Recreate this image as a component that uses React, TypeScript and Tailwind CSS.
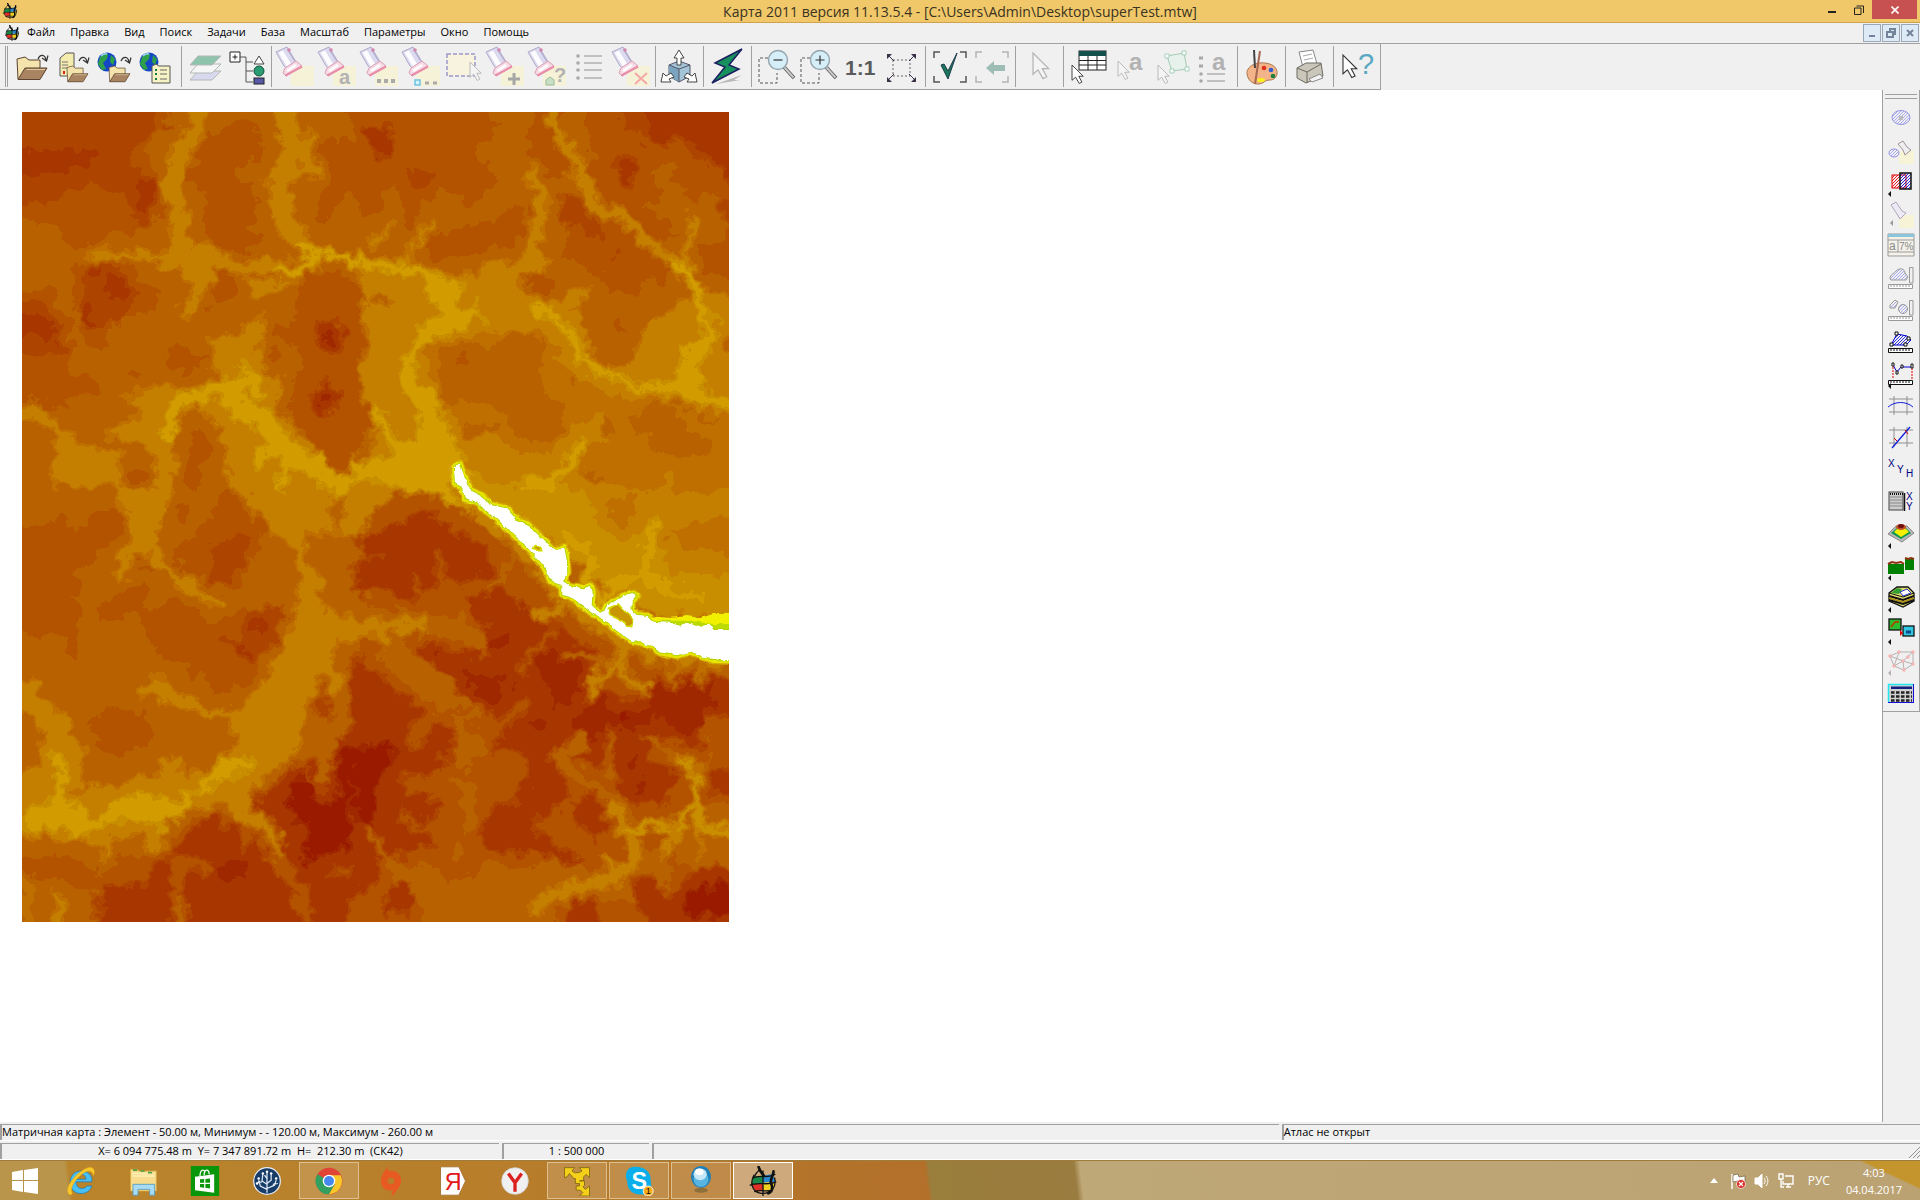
import type { ReactNode } from 'react';

type Shape = [level: number, points: string, width?: number];

/* Relief data: [elevation band 0..10, vertices, stroke width for valley lines]. */
const northWest: Shape[] = [
  [5, '0,0 430,0 490,40 430,110 410,160 440,230 460,270 450,340 380,400 320,400 260,430 200,450 140,430 160,375 0,365'],
  [6, '100,0 435,0 430,90 380,140 360,190 400,220 440,240 450,300 400,330 340,300 290,260 180,265 170,290 110,320 0,300 0,40'],
  [7, '0,155 180,155 260,135 265,185 180,200 150,225 0,230'],
  [7, '390,240 445,250 430,325 390,330 375,290'],
  [6, '370,330 430,330 410,370 375,390'],
  [7, '378,332 400,335 390,355'],
  [6, '455,70 500,70 490,95 460,90'],
  [5, '560,140 640,70 740,70 755,170 680,210 700,250 735,260 740,320 710,400 770,400 730,460 690,475 640,440 580,410 590,270 500,250 510,215 560,210'],
  [5, '990,0 1430,0 1460,100 1400,140 1430,200 1460,240 1300,420 1200,380 1110,340 1060,350 1020,250 1000,300 960,360 920,340 930,300 955,280 960,200 910,150 960,110 1040,130'],
  [7, '1060,80 1140,80 1150,150 1130,180 1080,145'],
  [5, '0,570 130,565 140,610 190,680 180,780 165,820 270,835 260,880 165,890 160,930 100,910 0,890'],
  [6, '0,610 120,610 150,680 160,740 140,765 0,765'],
  [7, '0,650 100,645 140,680 145,735 110,735 90,710 0,710'],
  [5, '180,490 370,490 390,540 450,575 440,635 370,640 290,690 285,750 230,740 215,690 190,600 200,560'],
  [6, '230,510 280,490 340,510 375,600 340,650 280,680 230,690 200,620 225,570'],
  [7, '285,525 340,530 350,595 310,600 280,560'],
  [7, '235,505 280,500 262,548'],
  [7, '205,620 240,610 235,650 275,665 250,690 215,665'],
  [5, '470,770 500,740 540,745 570,770 590,770 580,800 540,820 490,810'],
  [5, '335,825 390,800 385,830 350,845'],
  [2, '450,460 560,430 640,460 700,480 800,475 850,480 760,520 690,530 620,490 610,560 570,600 525,665 510,640 550,560 500,510 440,510'],
  [5, '610,500 640,490 675,560 650,610 615,590'],
  [5, '580,630 610,620 605,650'],
  [2, '570,0 565,90 515,145 500,200 480,240 500,310 510,380 515,450', 54],
  [2, '820,0 840,100 840,200 810,230 810,300 830,360 880,440', 62],
  [2, '770,235 850,190 910,105', 24],
  [2, '860,130 915,210 850,230', 32],
  [2, '240,470 300,460 330,475 380,462 440,475 510,480', 26],
  [2, '720,540 1120,540 1120,640 1060,620 1050,550 940,520 830,560 740,600'],
  [5, '890,530 940,515 1030,520 1060,570 1060,700 1050,790 1060,870 1080,960 1060,1040 1030,1080 990,1120 940,1070 900,1020 850,970 840,880 880,780 850,680 850,600'],
  [5, '790,670 860,690 850,730 800,720'],
  [5, '770,750 830,760 790,790'],
  [7, '915,670 985,665 1010,715 965,765 925,740'],
  [8, '945,695 972,692 978,732 945,735'],
  [7, '900,900 950,840 990,890 975,940 910,935'],
  [8, '935,880 965,875 965,910 940,915'],
  [2, '590,720 720,680 770,630 750,700 760,820 800,850 830,820 800,880 810,930 880,1010 940,1070 980,1130 940,1300 780,1300 720,1190 650,1150 640,1030 600,950 540,920 500,980 490,1100 490,1180 430,1300 370,1300 310,1150 200,1170 110,1140 140,1080 130,980 0,960 0,915 110,915 180,1010 240,1050 320,1060 350,1100 420,1040 270,1010 350,960 400,940 340,890 450,850 540,870 620,820'],
  [4, '330,1090 380,1060 440,1060 435,1150 400,1230 370,1225 330,1150'],
  [5, '355,1115 390,1100 415,1125 390,1155 355,1140'],
  [4, '500,1010 510,950 560,930 600,960 640,1030 640,1100 620,1180 690,1220 740,1220 760,1300 480,1300 490,1180 510,1100'],
  [5, '540,990 580,985 595,1050 570,1110 570,1170 530,1170 525,1100 550,1060'],
  [5, '500,1210 550,1240 520,1270'],
  [0, '470,1020 485,930 530,890 570,900 620,860 720,845 740,880', 38],
  [0, '690,790 745,850', 20],
  [0, '660,880 690,930 770,960 800,1020 860,1070 930,1110 1000,1165 1090,1120 1200,1110', 60],
  [0, '740,1100 750,1060 830,1060', 26],
  [0, '830,1090 805,1190', 26],
  [5, '955,1085 990,1115 1045,1095 1010,1060'],
  [0, '860,440 915,475 900,505 800,510 870,515 920,475 980,460 1050,490 1110,510', 28],
];

const northEast: Shape[] = [
  [2, '-70,520 150,490 270,530 330,500 450,480 480,400 510,450 540,500 440,540 480,580 540,610 650,560 660,590 610,610 640,680 660,700 650,760 700,800 790,780 830,680 870,650 930,610 990,560 1100,600 1100,950 990,940 880,890 760,910 640,840 560,800 520,690 380,710 200,740 190,800 200,880 260,960 290,1010 380,990 430,1040 500,1060 590,990 680,920 710,940 690,1000 740,1010 630,1050 640,1130 760,1150 830,1300 -100,1300 -50,1140 0,1060 15,980 -25,900 -35,800 0,720 -20,640 0,560'],
  [3, '160,740 300,710 400,700 520,690 570,790 700,870 780,910 880,910 1000,960 1100,960 1100,1300 860,1300 780,1150 640,1110 640,1050 740,1000 700,920 600,980 540,1050 440,1050 380,970 280,980 220,880 180,830'],
  [4, '200,760 300,725 360,740 420,705 510,700 525,750 500,800 530,880 580,920 575,980 520,1030 450,1020 410,980 400,940 350,910 290,920 230,890 205,850'],
  [4, '0,585 60,580 80,610 0,620'],
  [5, '255,770 285,770 280,800 255,795'],
  [4, '600,825 625,825 620,855 600,850'],
  [4, '760,965 830,930 870,910 930,950 960,1000 1015,1010 1010,1060 960,1075 850,1050 820,1000'],
  [6, '140,190 190,240 150,280 110,270'],
  [4, '30,300 70,240 110,330 80,390 30,400'],
  [4, '235,250 280,300 320,380 290,420 220,400 150,400 130,350'],
  [5, '150,440 220,400 310,380 400,350 480,300 470,390 430,440 300,460 200,480'],
  [5, '485,0 590,0 580,170 600,210 560,230 480,180'],
  [5, '660,0 1100,0 1100,560 1000,440 870,400 700,290 640,200 690,180 650,110'],
  [5, '590,280 660,300 740,370 820,450 900,500 880,560 810,530 810,590 720,580 700,530 580,460 600,420 560,330'],
  [6, '570,280 620,275 640,340 710,390 700,420 640,400 570,360'],
  [6, '720,455 750,440 765,460 740,480'],
  [6, '740,160 800,155 795,250 760,285 740,250'],
  [7, '755,180 785,175 785,260 750,270'],
  [6, '755,0 1100,0 1100,300 1050,210 990,180 940,130 820,130 800,80 750,100'],
  [7, '820,0 1100,0 1100,230 1050,220 1000,140 920,110 840,140'],
  [4, '830,210 910,180 915,250 970,300 1050,270 1080,330 1060,440 960,430 860,350 800,320 880,300'],
  [6, '1040,310 1100,290 1100,390 1050,340'],
  [5, '980,430 1100,450 1100,560 1010,520'],
  [5, '810,360 870,340 900,390 870,430 830,400'],
  [4, '640,620 760,570 880,600 870,650 790,720 800,770 740,760 660,740 650,690'],
  [5, '735,650 755,655 755,695 735,695'],
  [5, '450,545 520,525 560,550 520,580'],
  [4, '1050,720 1100,700 1100,760 1060,750'],
  [2, '550,0 555,100 600,150 630,220 660,290 690,335 740,335 790,380 830,430 900,470 960,520', 38],
  [2, '480,230 520,280 510,360 490,410 500,470 510,500', 38],
  [2, '960,355 975,370 935,500', 22],
  [2, '195,370 150,410 110,480 30,480', 20],
  [2, '70,380 0,430', 20],
  [0, '910,490 970,540 985,610 1000,660 1020,710 970,740 940,800', 30],
  [0, '1000,660 1055,645', 15],
  [0, '1030,700 1020,750 985,820 1000,880 1075,890 1100,925 1000,925 930,890 880,860 950,780 950,730'],
  [0, '500,628 545,640 600,700 650,790 720,825 800,860 880,860', 24],
  [0, '-40,510 30,490 130,490 190,520 270,550 275,590 250,620 310,610 330,640 360,680 310,650 270,690 210,700 160,740 135,780 140,850 180,870 210,910 215,960 250,1000 270,1080 400,1190 420,1300 250,1220 150,1200 60,1150 -40,1150 -60,1080 60,1080 60,1020 150,1020 150,940 110,910 100,850 90,780 130,740 140,690 230,640 170,590 160,530'],
  [0, '15,930 50,980 80,1050', 24],
  [1, '250,1110 420,1160 480,1130 560,1120 610,1200 700,1300 360,1300'],
  [0, '640,1030 600,1090 550,1140 480,1150', 34],
  [0, '560,1110 540,1160 600,1300 430,1300 440,1200'],
  [2, '905,1120 890,1180 830,1250', 24],
  [5, '60,1180 110,1170 150,1210 180,1300 60,1300'],
];

const southWest: Shape[] = [
  [5, '0,75 150,20 190,60 230,50 260,0 330,0 340,60 260,140 200,190 210,220 180,250 215,310 200,370 200,450 165,430 170,390 130,370 80,380 0,350'],
  [5, '350,250 400,215 430,240 400,270 410,310 480,260 550,290 600,340 700,300 770,400 750,470 720,530 640,540 600,550 580,470 550,510 520,460 450,460 460,430 415,410 400,340 345,290 300,340 265,330 270,280'],
  [5, '480,120 540,90 530,50 590,40 650,-60 760,60 750,110 710,170 700,230 640,240 600,220 530,190'],
  [6, '620,100 720,70 730,100 690,180 650,225 600,210 595,180'],
  [6, '640,370 700,390 690,340 710,300 820,285 820,330 800,400 770,420 720,460 650,410'],
  [7, '720,340 775,315 765,345 730,362'],
  [7, '660,405 700,405 722,438 690,432'],
  [5, '230,650 300,590 415,610 420,700 340,735 270,710'],
  [2, '0,510 90,510 100,570 180,640 220,720 210,800 230,840 120,860 60,800 100,700 80,620 0,590'],
  [2, '340,-60 470,-60 440,110 500,190 630,265 620,295 520,240 480,200 400,130 350,150 345,210 315,200 320,140 370,90 380,50'],
  [5, '375,150 445,165 440,185 380,175'],
  [2, '780,-60 960,-60 960,50 990,50 940,70 900,50 880,120 940,220 930,280 980,320 1110,330 1240,345 1110,380 980,400 970,450 1000,530 980,560 950,490 900,560 880,680 860,730 790,780 720,850 720,910 800,970 815,1030 780,980 700,930 640,880 560,890 500,920 450,970 460,1020 420,1040 400,980 310,980 290,1060 260,1010 190,980 140,1000 100,970 0,1000 0,800 60,770 120,830 220,860 250,820 320,830 380,790 450,800 440,760 500,740 520,790 600,770 650,740 680,680 640,630 590,620 540,600 460,570 380,560 430,490 520,550 590,590 680,610 720,570 790,470 830,360 870,280 860,150 820,60'],
  [0, '40,965 40,910 120,880 150,840 200,890 270,920 320,870 400,850 470,880 550,850 640,750 720,740 730,770 650,800 560,860 470,955 380,930 300,930 250,975 150,965 100,950'],
  [0, '135,730 160,770 150,820 130,880', 24],
  [5, '0,1045 180,1040 270,1090 300,1080 340,1030 420,1040 470,1020 500,960 580,920 680,920 720,960 760,980 800,1060 840,1110 880,1200 920,1300 250,1300 250,1140 200,1130 150,1110 0,1080'],
  [7, '270,1140 330,1120 410,1130 420,1060 470,1050 500,1110 560,1080 580,1065 480,1050 490,1010 560,950 620,900 640,960 690,930 695,1040 730,980 800,1080 840,1130 890,1300 270,1300'],
  [8, '640,1070 690,1055 715,1090 670,1120 640,1100'],
  [9, '668,1078 690,1076 688,1088'],
  [5, '600,1070 540,1060 510,1050 500,1150 515,1300', 36],
  [4, '512,1180 512,1300', 30],
  [3, '50,1130 50,1300', 44],
  [2, '145,1160 145,1300', 30],
  [4, '220,1150 220,1300', 26],
  [7, '720,880 800,820 850,770 920,740 930,800 960,820 960,760 980,680 1060,670 1090,600 1040,540 1030,440 1060,430 1200,500 1200,1300 920,1300 860,1120 830,1050 800,940'],
  [6, '910,600 945,520 970,600 940,650'],
  [9, '830,860 880,780 920,850 910,880 960,880 1000,840 970,770 1010,710 1140,700 1150,760 1120,940 1040,930 1030,1050 990,1010 930,1040 890,1060 870,1040 900,960 850,920'],
  [10, '1008,830 1040,828 1032,872 1008,865'],
  [8, '1040,950 1060,950 1055,980'],
  [5, '870,750 900,810 960,850', 14],
  [7, '1030,90 1200,60 1200,130 1040,110'],
  [7, '1050,150 1200,150 1200,260 1020,250 1050,200'],
  [5, '980,1080 1060,1100 1130,1150', 24],
  [2, '730,920 790,970 815,1030', 26],
  [5, '820,1050 860,1120 890,1210', 34],
];

const southEast: Shape[] = [
  [5, '0,20 60,-20 120,-60 240,-20 330,20 480,200 640,330 760,420 900,450 1100,460 1100,1300 -60,1300 -30,400 -20,380 130,380 150,310 20,290 -30,240'],
  [7, '-50,90 10,70 90,30 170,0 260,70 350,110 380,190 300,215 240,230 215,200 160,260 100,270 0,240 -50,245 -20,200 -60,170 0,140'],
  [7, '130,400 200,395 280,430 350,400 340,350 300,310 280,270 380,210 430,260 470,290 520,330 560,350 640,400 700,420 640,450 700,500 620,600 700,540 800,580 850,540 830,500 900,530 960,490 1100,500 1100,620 1010,620 990,720 900,680 850,690 830,740 940,800 880,890 780,880 740,820 730,740 690,780 600,740 560,700 540,730 600,850 560,900 520,940 490,950 540,1000 640,1050 600,1070 500,1030 340,1030 330,960 370,890 440,870 480,790 460,740 420,720 360,730 400,660 440,600 380,630 330,600 290,580 240,540 200,480 150,450'],
  [7, '-60,460 50,500 80,560 140,570 170,610 110,660 170,700 210,620 270,680 240,770 160,800 80,790 130,860 240,880 150,940 200,1000 100,1030 20,1060 30,1110 -60,1150'],
  [7, '100,1090 160,1120 130,1200 30,1220 60,1150'],
  [7, '610,880 670,850 720,960 700,990 620,940'],
  [7, '1010,780 1100,780 1100,860 1020,850'],
  [9, '-60,720 50,690 78,740 40,780 30,850 0,950 -40,940'],
  [8, '470,450 540,420 630,470 600,580 540,605 550,540 500,480'],
  [8, '600,640 660,580 700,530 740,620 830,590 860,500 920,530 1030,510 1030,570 960,690 850,610 800,660 720,650 650,715'],
  [9, '745,615 780,610 775,645 745,640'],
  [8, '270,480 330,500 390,500 390,600 330,560'],
  [8, '375,375 415,375 405,420 370,410'],
  [8, '485,640 530,620 535,655 500,675'],
  [8, '780,740 815,730 805,790 780,785'],
  [8, '790,820 840,800 830,830 850,860 800,840'],
  [8, '180,420 220,425 200,450'],
  [8, '420,505 450,515 430,540'],
  [4, '60,400 110,470 210,550 290,620 305,700 290,800', 84],
  [4, '0,340 150,335 260,350 330,410', 60],
  [2, '-60,345 150,345', 40],
  [2, '40,360 50,410', 26],
  [4, '290,840 300,930 260,1040', 44],
  [5, '300,740 420,740 470,790 420,880 320,880'],
  [4, '50,1080 200,1090 260,1120 340,1060 470,1080 560,1040 680,1080 780,1050 860,1020 920,1060 880,1180 800,1180 680,1170 560,1200 500,1300 130,1300 160,1180'],
  [7, '600,1170 680,1180 680,1300 570,1300'],
  [5, '200,130 215,220 330,230', 24],
  [5, '130,200 160,260 215,240', 20],
  [5, '-40,145 40,140', 10],
  [5, '470,580 420,620 380,660 300,640', 32],
  [5, '120,710 180,640 290,600', 24],
  [5, '110,790 140,850 250,830', 22],
  [5, '200,730 230,780 300,800', 20],
  [4, '640,690 560,740 640,810 740,870 800,950', 40],
  [4, '720,680 720,800', 22],
  [4, '840,680 900,730 960,790', 32],
  [4, '1000,880 1100,880 1100,1070 960,1080 900,1000'],
  [4, '0,960 60,1060 200,1090', 24],
  [5, '100,900 130,960 260,980 400,1060', 22],
  [5, '510,940 620,1000 720,1070', 30],
  [4, '1000,640 1020,760', 14],
  [5, '600,850 580,920 680,1010', 22],
  [7, '780,1120 840,1090 890,1180 960,1090 1010,1060 1100,1090 1100,1300 860,1300'],
  [9, '930,1200 980,1130 1100,1120 1100,1210 960,1220'],
  [2, '500,1200 540,1150 640,1130 720,1110 790,1060 805,1010 760,960 730,890', 36],
  [2, '700,1050 740,1110', 24],
  [1, '780,965 850,940 920,970 940,950 920,915 980,890 970,780 940,750', 30],
  [2, '970,790 1000,765', 18],
  [1, '980,890 1000,960 1100,970', 34],
  [2, '990,970 985,1030', 18],
  [2, '900,970 885,1040', 24],
  [1, '400,-60 1100,-60 1100,330 830,320 700,210 590,150'],
  [2, '650,-60 1100,-60 1100,200 890,190 880,130 840,60 760,90 690,50'],
  [3, '720,-40 800,-40 780,50 730,40'],
  [3, '890,60 1100,20 1100,150 930,110'],
  [0, '860,30 840,100 820,200 900,240 1000,260', 30],
  [0, '590,90 650,110', 30],
  [4, '420,60 520,190 650,320 770,410 920,460 1100,470', 64],
  [2, '260,-60 400,40 520,190 650,320 770,400 920,440 1100,455', 40],
  [0, '670,150 650,210 690,290 720,230 790,210', 34],
  [4, '440,130 390,200 350,250', 24],
  [5, '550,370 500,420 450,480', 24],
  [2, '580,260 560,310 500,310', 32],
  [2, '770,400 740,460 690,500 660,540', 32],
  [2, '740,460 780,520 840,540', 26],
  [3, '740,460 650,440 590,430', 18],
  [3, '920,440 920,520', 30],
  [3, '1000,450 980,520', 24],
];

const quadrants: [string, Shape[]][] = [
  ['translate(10 100) scale(.3333)', northWest],
  ['translate(370 100) scale(.3333)', northEast],
  ['translate(10 510) scale(.3333)', southWest],
  ['translate(370 510) scale(.3333)', southEast],
];

const grey = (level: number) => {
  const v = Math.round(((level + 0.5) / 11) * 255);
  return `rgb(${v},${v},${v})`;
};

const lake =
  'M268-140 280-110 300-60 340-40 360-15 410-5 440 30 480 50 550 120 568 118 583 112 590 150 592 185 580 215 600 228 640 235 662 228 668 245 665 285 690 308 703 302 712 285 760 258 790 248 800 258 785 275 785 300 800 315 830 318 848 335 900 338 930 347 950 338 980 347 1020 345 1035 360 1140 360V452L1030 450 1000 440 965 425 920 436 870 427 840 404 780 390 740 362 700 328 670 312 600 258 577 252 577 230 540 208 520 165 460 100 400 45 380 25 345 0 320-25 285-35 275-70 255-80 252-125Z';

function ReliefMap() {
  return (
    <svg viewBox="22 112 707 810" className="block w-[707px] max-w-full" role="img" aria-label="Матричная карта высот">
      <defs>
        <filter id="relief" filterUnits="userSpaceOnUse" x="-10" y="80" width="780" height="880" colorInterpolationFilters="sRGB">
          <feGaussianBlur in="SourceGraphic" stdDeviation="2.4" result="soft" />
          <feTurbulence type="fractalNoise" baseFrequency="0.07" numOctaves="3" seed="7" result="noise" />
          <feDisplacementMap in="soft" in2="noise" scale="22" xChannelSelector="R" yChannelSelector="G" result="warped" />
          <feColorMatrix in="noise" values="0 0 1 0 0 0 0 1 0 0 0 0 1 0 0 0 0 0 0 1" result="mono" />
          <feComposite in="warped" in2="mono" operator="arithmetic" k1="0" k2="1" k3="0.08" k4="-0.04" result="height" />
          <feComponentTransfer in="height">
            <feFuncR type="discrete" tableValues=".824 .792 .769 .749 .725 .702 .68 .659 .63 .604 .565" />
            <feFuncG type="discrete" tableValues=".612 .557 .498 .439 .384 .329 .267 .212 .157 .102 .04" />
            <feFuncB type="discrete" tableValues="0 0" />
          </feComponentTransfer>
        </filter>
        <filter id="shore" filterUnits="userSpaceOnUse" x="400" y="400" width="400" height="320" colorInterpolationFilters="sRGB">
          <feTurbulence type="fractalNoise" baseFrequency="0.16" numOctaves="2" seed="3" />
          <feDisplacementMap in="SourceGraphic" scale="4" xChannelSelector="R" yChannelSelector="G" />
        </filter>
      </defs>
      <g filter="url(#relief)">
        <rect x="-40" y="40" width="860" height="960" fill={grey(4)} />
        {quadrants.map(([transform, shapes]) => (
          <g key={transform} transform={transform} strokeLinejoin="round" strokeLinecap="round">
            {shapes.map(([level, points, width], i) =>
              width ? (
                <polyline key={i} points={points} fill="none" stroke={grey(level)} strokeWidth={width} />
              ) : (
                <polygon key={i} points={points} fill={grey(level)} />
              ),
            )}
          </g>
        ))}
      </g>
      <g filter="url(#shore)">
        <g transform="translate(370 510) scale(.3333)" strokeLinejoin="round">
          <path d={lake} fill="none" stroke="#d2a800" strokeWidth="26" />
          <path d={lake} fill="none" stroke="#e6e600" strokeWidth="18" />
          <path d="M830 330 860 320 900 324 950 318 990 324 1030 312 1140 312V365H1030L1000 350H860Z" fill="#f0f000" />
          <path d="M840 335 900 332 960 332 1030 342H1140V365H1030L1000 350H860Z" fill="#bcdc00" />
          <path d={lake} fill="#fff" stroke="#b4d200" strokeWidth="6" />
          <path d={lake} fill="#fff" />
          <path d="M715 295 745 282 760 300 788 325 785 350 770 348 765 338 740 325 720 315Z" fill="#c89600" stroke="#d2dc00" strokeWidth="5" />
          <path d="M488 115 492 107 508 108 515 122 505 122Z" fill="#c89600" stroke="#d2dc00" strokeWidth="5" />
        </g>
      </g>
    </svg>
  );
}

/* ---------- toolbar drawings, 42×42 ---------- */

const Pic = ({ children }: { children: ReactNode }) => (
  <svg viewBox="0 0 42 42" className="size-[42px]" aria-hidden="true" fill="none">
    {children}
  </svg>
);

const Pointer = ({ x, y, faded, s = 1 }: { x: number; y: number; faded?: boolean; s?: number }) => (
  <path transform={`translate(${x} ${y}) scale(${s})`} d="M0 0V17L4 13.500 8 20.500 11 19 7.500 12.500H12.500Z" fill={faded ? '#f4f4f4' : '#fff'} stroke={faded ? '#b4b4b4' : '#333'} />
);

const Curl = () => <path d="M22 13C24 8 29 8 30 14M26 12 30.500 15 32 9.500" stroke="#333" strokeWidth="1.200" />;

const Folder = ({ x = 0, y = 0, s = 1 }: { x?: number; y?: number; s?: number }) => (
  <g transform={`translate(${x} ${y}) scale(${s})`} stroke="#5a432e">
    <path d="M0 2 8 0 12 3H23V10L20 22H1Z" fill="#f5e3ae" />
    <path d="M8 11H30L23 22.500H1Z" fill="#a88462" />
    <path d="M9.500 12.500H28" stroke="#e0c8a0" />
  </g>
);

const Globe = () => (
  <g>
    <circle cx="13" cy="16" r="9.500" fill="#1446c8" />
    <path d="M6 11 10 7 14 8 13 13 9 17 12 23 8 24 4 18ZM17 9 21 13 19 19 16 16Z" fill="#2ea04a" />
    <path d="M7 10C9 8 11 7.500 13 8" stroke="#9fd0ff" strokeWidth="1.500" />
  </g>
);

const Torch = ({ children }: { children?: ReactNode }) => (
  <Pic>
    <rect x="17" y="20" width="23" height="20" fill="#f5f2d8" />
    <path d="M2 6 13 1 22 16 13 23 10 20Z" fill="#dcdaee" stroke="#aeaaca" />
    <path d="M4.500 6.500 9 4.500 17 18 13 21Z" fill="#fcfcff" />
    <path d="M14 4 21 15" stroke="#b4b0d0" strokeWidth="1.500" />
    <path d="M11 22 22 15 28 20 12 30 9 27Z" fill="#f6dce6" stroke="#dc9cb4" />
    <path d="M13 25 22 19" stroke="#fff" strokeWidth="2.500" />
    <path d="M11.500 29.500 28 20.500" stroke="#e88ca8" strokeWidth="2" />
    <circle cx="15" cy="4" r="1.800" fill="#d488b0" />
    {children}
  </Pic>
);

const Layers = () => (
  <Pic>
    {[['#d8d8ee', 25], ['#f6f6f6', 18], ['#8fc4ac', 10]].map(([fill, y]) => (
      <path key={y} transform={`translate(6 ${y})`} d="M8 0H31L22 9H0Z" fill={fill as string} stroke="#b4b8b6" />
    ))}
  </Pic>
);

const Glass = ({ plus }: { plus?: boolean }) => (
  <Pic>
    <path d="M14 12H5V37H23V27" stroke="#555" strokeDasharray="3 2" />
    <path d="M30 21 40 32" stroke="#555" strokeWidth="3.500" />
    <path d="M30 21 39.500 31.500" stroke="#ccc" strokeWidth="2" />
    <circle cx="24" cy="14" r="9.500" fill="#d6eef8" stroke="#93a4ae" strokeWidth="1.400" />
    <path d={plus ? 'M19.500 14H28.500M24 9.500V18.500' : 'M19.500 14H28.500'} stroke="#333" strokeWidth="1.200" />
  </Pic>
);

const Letter = ({ x, y, size, fill = '#b2b2b2', children }: { x: number; y: number; size: number; fill?: string; children: ReactNode }) => (
  <text x={x} y={y} fontSize={size} fill={fill} fontFamily="Liberation Sans, sans-serif" fontWeight="bold">
    {children}
  </text>
);

const dots = (ys: number[], x1: number, x2: number) =>
  ys.map((y) => (
    <g key={y}>
      <circle cx={x1} cy={y} r="1.800" fill="#a8a8a8" />
      <path d={`M${x1 + 6} ${y}H${x2}`} stroke="#b0b0b0" strokeWidth="1.500" />
    </g>
  ));

const corners = 'M12 6H6V12M32 6H38V12M12 36H6V30M32 36H38V30';

const toolbar: [string, ReactNode][][] = [
  [
    ['Открыть', <Pic key="a"><Folder x={7} y={11} /><g transform="translate(6 0)"><Curl /></g></Pic>],
    ['Открыть базу', <Pic key="a"><path d="M8 12 14 7H22V24L16 30H8Z" fill="#f4ecae" stroke="#555" /><path d="M10 16H16M10 19H16M10 22H16" stroke="#777" /><path d="M12 25V28" stroke="#e02020" strokeWidth="2" /><Folder x={15} y={20} s={0.7} /><g transform="translate(5 2)"><Curl /></g></Pic>],
    ['Открыть с сервера', <Pic key="a"><Globe /><Folder x={15} y={20} s={0.7} /><g transform="translate(5 2)"><Curl /></g></Pic>],
    ['Список карт', <Pic key="a"><Globe /><path d="M16 20 20 18 23 20H34V37H16Z" fill="#f7f2c4" stroke="#555" /><path d="M19 24H21M19 28H21M19 33H21" stroke="#187848" strokeWidth="2" /><path d="M24 24H31M24 28H31M24 33H31" stroke="#666" /></Pic>],
  ],
  [
    ['Слои', <Layers key="a" />],
    ['Состав объектов', <Pic key="a"><path d="M4 6H14V16H4ZM6.500 11H11.500M9 8.500V13.500" fill="#fff" stroke="#222" /><path d="M14 11H20V36H27M20 16H27M20 25H27" stroke="#555" /><path d="M33 10 38 18H28Z" fill="#fff" stroke="#444" /><circle cx="33" cy="25" r="5" fill="#2a9c74" stroke="#115038" /><rect x="28" y="32" width="10" height="6" fill="#5858a8" stroke="#222" /></Pic>],
  ],
  [
    ['Поиск', <Torch key="a" />],
    ['Поиск по названию', <Torch key="a"><Letter x={23} y={38} size={20}>a</Letter></Torch>],
    ['Поиск далее', <Torch key="a"><path d="M19 35H23M26 35H30M33 35H37" stroke="#aaa" strokeWidth="4" /></Torch>],
    ['Поиск объекта', <Torch key="a"><rect x="15" y="34" width="5" height="5" fill="#d8f2fa" stroke="#6cc4e0" strokeWidth="1.500" /><path d="M25 37H29M33 37H37" stroke="#aaa" strokeWidth="3" /></Torch>],
    ['Область', <Pic key="a"><rect x="5" y="8" width="28" height="22" fill="#f7f3de" stroke="#9c98c8" strokeWidth="1.500" strokeDasharray="4 2" /><Pointer x={28} y={16} faded s={0.9} /></Pic>],
    ['Добавить', <Torch key="a"><path d="M24 33H36M30 27V39" stroke="#a6a6a6" strokeWidth="3" /></Torch>],
    ['Запрос', <Torch key="a"><Letter x={28} y={36} size={20}>?</Letter><path d="M20 39V34L24 31 28 34V39Z" fill="#c8e0c4" stroke="#9cb89c" /></Torch>],
    ['Список', <Pic key="a">{dots([10, 17, 24, 32], 10, 34)}</Pic>],
    ['Сброс', <Torch key="a"><path d="M25 27 37 38M37 27 25 38" stroke="#f4a8a8" strokeWidth="2" /></Torch>],
  ],
  [['Трёхмерный вид', <Pic key="a"><path d="M11 19 21 15 32 19V30L21 36 11 30Z" fill="#a4c4d8" stroke="#556" /><path d="M11 19 21 23V36L11 30Z" fill="#7aa4c0" /><path d="M11 19 21 23 32 19M21 23V36" stroke="#556" /><path d="M21 4 26 12H23V19H19V12H16ZM3 36 5 27 8 30 13 27 16 31 11 33 13 36ZM39 36 37 27 34 30 29 27 26 31 31 33 29 36Z" fill="#fff" stroke="#444" /></Pic>]],
  [['Выполнить', <Pic key="a"><path d="M10 38 36 29 28 34 34 34Z" fill="#b8b8b8" /><path d="M36 3 9 17 19 21 6 37 33 23 23 19Z" fill="#16905c" stroke="#1c2060" strokeWidth="1.500" /></Pic>]],
  [
    ['Уменьшить', <Glass key="a" />],
    ['Увеличить', <Glass key="a" plus />],
    ['Масштаб 1:1', <Pic key="a"><Letter x={7} y={29} size={21} fill="#5a5a5a">1:1</Letter></Pic>],
    ['Весь экран', <Pic key="a"><rect x="13" y="14" width="17" height="16" stroke="#666" strokeDasharray="2 2" /><path d="M8 9 14 15M35 9 29 15M8 34 14 28M35 34 29 28" stroke="#3c3048" /><path d="M7 8H12L7 13ZM36 8H31L36 13ZM7 36H12L7 31ZM36 36H31L36 31Z" fill="#3c3048" /></Pic>],
  ],
  [
    ['Применить', <Pic key="a"><path d={corners} stroke="#555" strokeWidth="1.500" /><path d="M13 19 20 33 29 7 20 25 16 18Z" fill="#187858" stroke="#203c50" /></Pic>],
    ['Назад', <Pic key="a"><path d={corners} stroke="#b4b4b4" strokeWidth="1.500" /><path d="M16 22 24 15V19H35V25H24V29Z" fill="#9cbcb4" /></Pic>],
  ],
  [['Выбор', <Pic key="a"><Pointer x={15} y={7} faded s={1.25} /></Pic>]],
  [
    ['Таблица', <Pic key="a"><rect x="13" y="5" width="27" height="19" fill="#fff" stroke="#222" /><path d="M13 5H40V10H13Z" fill="#14504c" /><path d="M13 14.500H40M13 19H40M22 10V24M31 10V24" stroke="#222" /><Pointer x={6} y={19} s={0.9} /></Pic>],
    ['Подпись', <Pic key="a"><Letter x={21} y={24} size={24}>a</Letter><Pointer x={10} y={15} faded s={0.9} /></Pic>],
    ['Контур', <Pic key="a"><path d="M17 10 34 7 37 23 22 25Z" fill="#e8f2ec" stroke="#a4ccb8" /><path d="M15 8H19V12H15ZM32 5H36V9H32ZM35 21H39V25H35ZM20 23H24V27H20Z" fill="#fff" stroke="#a4d0b8" /><Pointer x={8} y={19} faded s={0.9} /></Pic>],
    ['Легенда', <Pic key="a">{dots([28, 35], 9, 33)}<path d="M7 12H11M7 20H11" stroke="#a8a8a8" strokeWidth="3" /><Letter x={20} y={24} size={24}>a</Letter></Pic>],
  ],
  [['Палитра', <Pic key="a"><path d="M7 28C6 18 22 14 32 19 40 23 38 34 30 34 24 34 24 38 18 38 12 38 8 34 7 28Z" fill="#f2b488" stroke="#a87850" /><circle cx="24" cy="22" r="2.300" fill="#e03020" /><circle cx="31" cy="24" r="2.300" fill="#3060d0" /><circle cx="33" cy="30" r="2.300" fill="#208040" /><ellipse cx="21" cy="34" rx="4" ry="2" fill="#f8f020" /><path d="M14 4 15 22" stroke="#444" strokeWidth="2" /><path d="M20 5 15 38" stroke="#a86850" strokeWidth="2" /></Pic>]],
  [['Печать', <Pic key="a"><path d="M11 6 25 4 29 18 15 21Z" fill="#fff" stroke="#888" /><path d="M15 10 24 8M16 14 25 12" stroke="#aaa" /><path d="M9 22 18 17 33 17 35 30 18 37 9 32Z" fill="#cac7ba" stroke="#6c6a62" /><path d="M9 22 19 26 33 18M19 26V37" stroke="#6c6a62" /><path d="M21 33 32 28 35 32 24 36Z" fill="#f4f4f4" stroke="#888" /></Pic>]],
  [['Справка', <Pic key="a"><Pointer x={7} y={9} s={1.1} /><text x="22" y="28" fontSize="29" fill="#58a8c4" fontFamily="Liberation Sans, sans-serif">?</text></Pic>]],
];

/* ---------- side panel drawings, 28×28 ---------- */

const Tri = () => <path d="M1 26 4 23V29Z" fill="#111" />;
const Ruler = ({ c = '#111' }: { c?: string }) => (
  <path d="M1.500 20.500H25.500V24.500H1.500ZM4 21V23M7 21V23M10 21V23M13 21V23M16 21V23M19 21V23M22 21V23" fill="#fff" stroke={c} />
);
const hatch = (name: string) => `url(#hatch-${name})`;

const side: [string, ReactNode][] = [
  ['Площадной объект', <><ellipse cx="14" cy="13.500" rx="9" ry="7" fill={hatch('lilac')} stroke="#9494e8" /><rect x="12" y="12" width="4" height="4" fill="#bbb" /></>],
  ['Поиск площадного', <><rect x="12" y="15" width="15" height="13" fill="#f6f3d6" /><ellipse cx="7" cy="17" rx="5" ry="4" fill={hatch('lilac')} stroke="#9494e8" /><path d="M11 8 16 5 20 11 24 14 18 19 16 14Z" fill="#eee" stroke="#a09098" /></>],
  ['Сравнение', <><rect x="5" y="7" width="14" height="13" fill={hatch('red')} stroke="#e00000" /><rect x="13" y="5" width="11" height="16" fill={hatch('blue')} stroke="#111" strokeWidth="1.500" /><Tri /></>],
  ['Поиск', <><rect x="12" y="15" width="15" height="13" fill="#f6f3d6" /><path d="M4 5 9 2 15 11 19 13 13 19 10 14Z" fill="#eceaf4" stroke="#b4a4bc" /><path d="M3 23 6 20V26Z" fill="#999" /></>],
  ['Атрибуты', <><path d="M1 2H27V24H1Z" fill="#f4f2e8" stroke="#999" /><path d="M1 2H27V5H1Z" fill="#8cc4dc" /><path d="M1 8H27M1 20H27M11 8V20" stroke="#999" /><text x="2" y="18" fontSize="12" fill="#888" fontFamily="Liberation Sans, sans-serif">a</text><text x="12" y="18" fontSize="10" fill="#888" fontFamily="Liberation Sans, sans-serif">7%</text></>],
  ['Площадь', <><path d="M3 15C3 10 7 10 9 7 13 3 18 5 18 9L21 13 19 16H4Z" fill={hatch('lilac')} stroke="#999" /><Ruler c="#999" /><path d="M22.500 3.500H26V19H22.500Z" stroke="#999" /></>],
  ['Расстояние между', <><path d="M3 9 8 4 11 6 8 12H3Z" fill={hatch('lilac')} stroke="#999" /><circle cx="16" cy="13" r="4.500" fill={hatch('lilac')} stroke="#999" /><Ruler c="#999" /><path d="M22.500 4.500H26V19H22.500Z" stroke="#999" /></>],
  ['Измерить площадь', <><path d="M4 17 10 6 20 8 24 12 19 17Z" fill={hatch('blue')} stroke="#0000d0" /><path d="M8 4H11V7H8ZM20 9H23V12H20ZM17 15H20V18H17ZM3 15H6V18H3Z" fill="#fff" stroke="#111" /><Ruler /></>],
  ['Измерить длину', <><path d="M6 5 10 12 14 7H25" stroke="#0000d0" /><path d="M6 7V19M25 8V19" stroke="#e00000" strokeDasharray="2 1" /><path d="M5 3H7V6H5ZM9 11H11V14H9ZM14 5H16V8H14ZM24 4H26V8H24Z" fill="#fff" stroke="#111" /><Ruler /><Tri /></>],
  ['Кривая', <><path d="M2 7H26M2 20H26M7 4V23M20 4V23" stroke="#909090" /><path d="M1 15C8 9 19 9 26 15" stroke="#1020e0" /></>],
  ['Угол', <><path d="M2 6H26M2 19H26M7 3V23M20 3V23" stroke="#909090" /><path d="M5 24 23 3" stroke="#1020e0" strokeWidth="1.300" /><path d="M7 14 10 17M18 6 21 10" stroke="#e00000" /></>],
  ['Координаты XYH', <g fontFamily="Liberation Sans, sans-serif" fontSize="10" fill="#000080"><text x="1" y="11">X</text><text x="10" y="17">Y</text><text x="19" y="21">H</text></g>],
  ['Список координат', <><rect x="2" y="4" width="14" height="18" fill="#ccc" stroke="#444" /><path d="M3 9H15M3 12H15M3 15H15M3 18H15" stroke="#888" /><path d="M3 6H16" stroke="#111" strokeWidth="2" strokeDasharray="1 1" /><path d="M17.500 5V23" stroke="#111" strokeWidth="1.500" /><g fontFamily="Liberation Sans, sans-serif" fontSize="10" fill="#000080"><text x="19" y="12">X</text><text x="19" y="22">Y</text></g></>],
  ['Матрица высот', <><path d="M1 14 9 6 20 6 27 13 15 22Z" fill="#b8b8b8" stroke="#888" /><path d="M4 13 10 8 19 8 24 13 14 19Z" fill="#109850" /><path d="M7 12 12 7 18 8 22 12 14 17Z" fill="#f4f000" /><ellipse cx="14" cy="7" rx="5" ry="3" fill="#c05020" /><ellipse cx="14" cy="6" rx="3" ry="2" fill="#701010" /><Tri /></>],
  ['Профиль', <><path d="M1 12H17V22H1ZM18 7H27V18H18Z" fill="#008000" /><path d="M1 12 5 10 9 11 14 10 17 12M18 6 21 7 24 6 27 7" stroke="#903010" strokeWidth="2" /><Tri /></>],
  ['Блок-диаграмма', <><path d="M2 9 10 3H21L27 9V17L16 23 2 17Z" fill="#e8e070" stroke="#111" strokeWidth="1.300" /><path d="M2 9 16 13 27 9" stroke="#111" /><path d="M2 12 16 16 27 12" stroke="#111" strokeWidth="2" /><path d="M2 14 16 18 27 14" stroke="#b09010" strokeWidth="1.500" /><path d="M2 16 16 20 27 16" stroke="#111" strokeWidth="2" /><path d="M4 9 10 4 15 5 12 10Z" fill="#30a030" /><path d="M13 8 20 5 24 9 16 12Z" fill="#fff" stroke="#2030c0" /><Tri /></>],
  ['Пересчёт матриц', <><rect x="2" y="3" width="12" height="11" fill="#28c030" stroke="#111" strokeWidth="1.300" /><path d="M4 11 8 6 12 6" stroke="#a05000" strokeWidth="2" /><rect x="16" y="10" width="11" height="10" fill="#30c8e0" stroke="#111" strokeWidth="1.300" /><path d="M19 16H24" stroke="#104890" strokeWidth="3" /><path d="M13 14 16 17 13 20Z" fill="#e00000" /><Tri /></>],
  ['Сеть', <><path d="M3 8 12 4 26 4V16L17 22 7 18 3 8 16 13 26 4M12 4 7 18 16 13 26 16M17 22 16 13" stroke="#b8b0b0" /><path d="M2 7H4V9H2ZM11 3H13V5H11ZM25 3H27V5H25ZM25 15H27V17H25ZM16 21H18V23H16ZM6 17H8V19H6ZM15 12H17V14H15ZM20 8H22V10H20Z" fill="#fff" stroke="#f4a0a0" /><path d="M1 25 4 22V28Z" fill="#b8b0b0" /></>],
  ['Калькулятор', <><rect x="1.500" y="4.500" width="25" height="18" fill="#d0d0d0" stroke="#1010d8" /><path d="M1.500 22V4.500H26" stroke="#20e8f0" strokeWidth="1.500" /><path d="M4 6.500H25V9H4Z" fill="#102080" /><path d="M4 12.500H25M4 16.500H25M4 20.500H25" stroke="#222" strokeWidth="2.500" strokeDasharray="3.500 1.500" /></>],
];

const BeetleLogo = ({ className }: { className: string }) => (
  <svg viewBox="0 0 32 34" className={className} aria-hidden="true" fill="none">
    <path d="M5 12 16 11V19L3 21Z" fill="#188848" />
    <path d="M16 11 27 9 30 18 16 19Z" fill="#2888d0" />
    <path d="M3 21 16 19V28L8 29Z" fill="#e03028" />
    <path d="M16 19 30 18 27 27 16 28Z" fill="#f0d020" />
    <path d="M6 10C1 18 3 30 14 31 25 32 32 24 29 13M16 5V34M4 14C12 9 22 15 30 9M1 22C10 17 20 23 31 18M6 29C13 26 20 30 27 27" stroke="#111" strokeWidth="1.500" />
    <path d="M11 1C12 6 15 8 17 11M28 6C27 13 24 15 25 19 27 24 27 29 22 31" stroke="#111" strokeWidth="3" strokeLinecap="round" />
    <path d="M13 3C10 6 8 8 6 12" stroke="#111" strokeWidth="1.500" />
  </svg>
);

const menu = ['Файл', 'Правка', 'Вид', 'Поиск', 'Задачи', 'База', 'Масштаб', 'Параметры', 'Окно', 'Помощь'];

/* ---------- taskbar drawings, 36×36 ---------- */

const tasks: { name: string; open?: boolean; art: ReactNode }[] = [
  { name: 'Internet Explorer', art: <><path d="M31 19H12C12 24 15 27 19 27 22 27 24 26 25 24H31C29 30 24 33 18 33 10 33 5 27 5 20 5 11 11 6 18 6 27 6 32 12 31 19ZM12 16H24C24 12 21 10 18 10 15 10 12 12 12 16Z" fill="#48c0f4" stroke="#1478c0" strokeWidth=".8" /><path d="M5 35C-5 30 10 8 26 2 33 0 36 5 33 12 32 7 29 5 24 7 14 12 3 26 8 33Z" fill="#f8c828" stroke="#d89810" strokeWidth=".5" /></> },
  { name: 'Проводник', art: <><path d="M3 4H11L13 6H34V30H3Z" fill="#f6dc8c" stroke="#d8a840" /><path d="M5 9H32M5 12H32" stroke="#fff0b8" strokeWidth="2" /><path d="M6 5H11M15 6H20M24 8H29" stroke="#48a048" strokeWidth="2" /><path d="M6 22H32V35H26V28H12V35H6Z" fill="#a8dcf4" stroke="#5098c0" /></> },
  { name: 'Магазин', art: <><rect x="1" y="0" width="34" height="36" fill="#0a960a" /><path d="M6 13 29 10V32L6 29Z" fill="#fff" /><path d="M12 12C12 4 17 3 18 8M17 11C17 3 23 3 23 10" stroke="#fff" strokeWidth="1.500" /><path d="M12 16 17 15.500V20H12ZM18.500 15.500 24 15V20H18.500ZM12 21.500H17V26L12 25.500ZM18.500 21.500H24V27L18.500 26Z" fill="#0a960a" /></> },
  { name: 'Дерево', art: <><circle cx="18" cy="18" r="16" fill="#173c68" stroke="#e8eef4" strokeWidth="1.500" /><path d="M18 32V8M18 28 10 24 8 17M18 27 27 23 29 17M18 22 12 18 13 10M18 21 23 17V10M18 15 15 11M12 19 6 20M25 22 31 21" stroke="#dce8f4" strokeWidth="1.500" /><g fill="#fff"><circle cx="18" cy="7" r="1.500" /><circle cx="13" cy="9" r="1.500" /><circle cx="23" cy="9" r="1.500" /><circle cx="8" cy="15" r="1.500" /><circle cx="29" cy="15" r="1.500" /><circle cx="6" cy="21" r="1.500" /></g></> },
  { name: 'Google Chrome', open: true, art: <><circle cx="18" cy="18" r="16" fill="#e04434" /><path d="M18 18 4 10A16 16 0 0 0 18 34L25 22Z" fill="#34a060" /><path d="M18 18 25 22 18 34A16 16 0 0 0 32 11H18Z" fill="#f8c828" /><circle cx="18" cy="18" r="7.500" fill="#fff" /><circle cx="18" cy="18" r="6" fill="#4688f0" /></> },
  { name: 'Origin', art: <path fillRule="evenodd" d="M16 0C14 3 14 4 15 6 24 4 31 10 30 19 29 27 23 31 19 37 18 34 20 31 20 29 11 31 5 25 6 17 7 9 11 4 16 0ZM18 14A4 4 0 1 0 18 22 4 4 0 1 0 18 14Z" fill="#e85a24" /> },
  { name: 'Яндекс', art: <><path d="M3 1H25L33 18 25 35H3Z" fill="#fff" stroke="#a06c28" /><text x="8" y="29" fontSize="28" fill="#e01818" fontFamily="Liberation Sans, sans-serif">Я</text></> },
  { name: 'Яндекс Браузер', art: <><circle cx="18" cy="18" r="16" fill="#f0f0f0" stroke="#d0d0d0" /><path d="M10 9 18 20 26 9M18 19V31" stroke="#dc2020" strokeWidth="4" /></> },
  { name: 'Конвертер', open: true, art: <path d="M3 2H15L12 6 15 8H20L24 6 21 2H33V14L29 10 26 13V17L21 18H27V23L25 25 28 28 33 24V36H21L25 32 22 29H17V24H21V21H16V15H14L9 9 6 13 3 14Z" fill="#f4d018" stroke="#7c6410" /> },
  { name: 'Skype', open: true, art: <><path d="M6 3C11 0 17 1 21 2 29 4 33 11 32 19 35 29 28 36 20 34 10 35 3 27 4 18 1 13 2 7 6 3Z" fill="#0aaeea" /><text x="9" y="28" fontSize="28" fill="#fff" fontWeight="bold" fontFamily="Liberation Sans, sans-serif">S</text><circle cx="29" cy="30" r="6" fill="#fcac18" stroke="#fff" /><text x="26" y="34" fontSize="11" fill="#111" fontFamily="Liberation Sans, sans-serif">1</text></> },
  { name: 'Глобус', open: true, art: <><ellipse cx="18" cy="29" rx="8" ry="3" fill="#5c5028" opacity=".5" /><ellipse cx="18" cy="13" rx="12" ry="13" fill="#2080b8" /><ellipse cx="18" cy="16" rx="9" ry="9" fill="#58b4e0" /><ellipse cx="17" cy="10" rx="8" ry="7" fill="#c4e8f8" /><ellipse cx="16" cy="7" rx="5" ry="4" fill="#fff" /></> },
];

const shell = 'font-["Open_Sans","Noto_Sans",sans-serif]';
const cell = 'flex h-4 items-center border-l-2 border-t border-[#a0a0a0] text-[11px]';

export default function App() {
  return (
    <div className={`flex min-h-screen flex-col bg-[#f0f0f0] text-black ${shell}`}>
      <svg className="absolute size-0" aria-hidden="true">
        <defs>
          {[['lilac', '#a4a4f0'], ['red', '#f00000'], ['blue', '#1818e0']].map(([name, c]) => (
            <pattern key={name} id={`hatch-${name}`} width="3" height="3" patternUnits="userSpaceOnUse">
              <path d="M0 3 3 0" stroke={c} strokeWidth=".9" />
            </pattern>
          ))}
        </defs>
      </svg>

      <header className="grid h-[23px] grid-cols-[1fr_auto_1fr] items-start border-b border-[#cfa250] bg-[#f0c869]">
        <BeetleLogo className="ml-[2px] mt-[3px] h-4 w-4" />
        <h1 className="text-sm leading-[23px] text-[#3a3222]">Карта 2011 версия 11.13.5.4 - [C:\Users\Admin\Desktop\superTest.mtw]</h1>
        <div className="flex justify-end pr-[3px]">
          <button aria-label="Свернуть" className="grid h-[19px] w-[26px] place-items-center"><span className="mt-1 h-[2px] w-2 bg-[#222]" /></button>
          <button aria-label="Восстановить" className="grid h-[19px] w-[27px] place-items-center">
            <svg viewBox="0 0 10 10" className="size-[10px]" fill="none" stroke="#222"><path d="M.5 3H7V9.500H.5ZM2.500 1H9.500V8" /></svg>
          </button>
          <button aria-label="Закрыть" className="grid h-[19px] w-[45px] place-items-center bg-[#c75050]">
            <svg viewBox="0 0 8 8" className="size-2" stroke="#fff" strokeWidth="1.600"><path d="M.5.5 7.500 7.500M7.500.5.5 7.500" /></svg>
          </button>
        </div>
      </header>

      <nav className="flex h-[20px] items-center pl-1 text-[11px]" aria-label="Меню">
        <BeetleLogo className="mr-[7px] h-4 w-4" />
        <div className="flex gap-[15px] pb-[2px]">
          {menu.map((m) => (
            <button key={m}>{m}</button>
          ))}
        </div>
        <div className="ml-auto flex gap-px pr-px">
          {[['Свернуть окно', 'M3 9H9'], ['Восстановить окно', 'M2 5H8V10H2ZM5 5V2H10V7H8'], ['Закрыть окно', 'M3 3 9 9M9 3 3 9']].map(([label, d]) => (
            <button key={label} aria-label={label} className="grid size-[18px] place-items-center border border-[#98a8b8] bg-[#dfeaf7]">
              <svg viewBox="0 0 12 12" className="size-3" fill="none" stroke="#74849a" strokeWidth="2"><path d={d} /></svg>
            </button>
          ))}
        </div>
      </nav>

      <div className="flex h-[47px] border-t border-[#a0a0a0]">
        <div className="flex h-full border-b border-r border-[#a0a0a0]" role="toolbar" aria-label="Панель инструментов">
          <div className="my-[2px] ml-[5px] flex w-[3px] border-x border-[#a0a0a0]" />
          {toolbar.map((group, g) => (
            <div key={g} className="my-[2px] flex border-r border-[#a0a0a0] pl-[2px] pr-[3px] last:border-r-0 last:pr-[2px]">
              {group.map(([label, art]) => (
                <button key={label} aria-label={label} title={label}>{art}</button>
              ))}
            </div>
          ))}
        </div>
      </div>

      <main className="flex flex-1 bg-white">
        <div className="flex-1 pl-[22px] pt-[22px]">
          <ReliefMap />
        </div>
        <aside className="w-[38px] border-l border-[#a0a0a0] bg-[#f0f0f0]">
          <div className="flex flex-col items-center border-b border-r border-[#a0a0a0] pb-px" role="toolbar" aria-label="Расчёты">
            <div className="mb-[3px] mt-[4px] h-[5px] w-8 border-y border-[#a0a0a0]" />
            {side.map(([label, art]) => (
              <button key={label} aria-label={label} title={label} className="grid h-8 w-8 place-items-center">
                <svg viewBox="0 0 28 28" className="size-7 overflow-visible" fill="none" aria-hidden="true">{art}</svg>
              </button>
            ))}
          </div>
        </aside>
      </main>

      <footer className="flex flex-col gap-[2px] pt-[2px]">
        <div className="flex gap-[3px] border-b border-white">
          <div className={`${cell} w-[66.6%]`}>Матричная карта : Элемент - 50.00 м, Минимум - - 120.00 м, Максимум - 260.00 м</div>
          <div className={`${cell} flex-1`}>Атлас не открыт</div>
        </div>
        <div className="flex gap-[3px] border-b border-white">
          <div className={`${cell} w-[499px] justify-center whitespace-pre`}>X= 6 094 775.48 m  Y= 7 347 891.72 m  H=  212.30 m  (СК42)</div>
          <div className={`${cell} w-[147px] justify-center`}>1 : 500 000</div>
          <div className={`${cell} flex-1 justify-end`}>
            <svg viewBox="0 0 12 12" className="size-3" stroke="#909090"><path d="M1 12 12 1M5 12 12 5M9 12 12 9" /></svg>
          </div>
        </div>
      </footer>

      <div className="flex h-10 border-t border-[#a07c3c] bg-[linear-gradient(205deg,#c4952c_24px,transparent_26px),linear-gradient(83deg,#b9954c_0,#b9954c_68px,#b9842c_72px,#b87e2b_500px,#b2702a_922px,#9a7e3c_926px,#9a7c40_1070px,#bfa878_1076px,#bba272)]">
        <button aria-label="Пуск" className="grid w-[50px] place-items-center">
          <svg viewBox="0 0 28 28" className="size-7" fill="#fff"><path d="M1 5 12 3V13H1ZM13 3 27 1V13H13ZM1 14H12V25L1 23ZM13 14H27V27L13 25Z" /></svg>
        </button>
        {tasks.map((t) => (
          <button key={t.name} aria-label={t.name} className="w-[62px] px-px py-px">
            <span className={t.open ? 'grid h-full place-items-center border border-[#dcc090] bg-white/15' : 'grid h-full place-items-center'}>
              <svg viewBox="0 0 36 36" className="size-[30px]" fill="none" aria-hidden="true">{t.art}</svg>
            </span>
          </button>
        ))}
        <button aria-label="Карта 2011" className="w-[62px] px-px py-px">
          <span className="grid h-full place-items-center border border-white bg-[#cda97c]"><BeetleLogo className="h-[30px] w-8" /></span>
        </button>
        <div className="ml-auto flex items-center gap-[8px] pr-[18px] text-white">
          <button aria-label="Показать скрытые значки"><svg viewBox="0 0 8 5" className="h-[5px] w-2" fill="#fff"><path d="M4 0 8 5H0Z" /></svg></button>
          <button aria-label="Центр поддержки" className="ml-[4px]">
            <svg viewBox="0 0 16 16" className="size-4" fill="none"><path d="M2 1V16" stroke="#fff" strokeWidth="1.500" /><path d="M3 2 8 1 9 4 15 3V10H9L8 8 3 9Z" fill="#fff" stroke="#5c4c2c" strokeWidth=".6" /><circle cx="11" cy="11" r="4.500" fill="#d83028" stroke="#fff" strokeWidth=".7" /><path d="M9 9 13 13M13 9 9 13" stroke="#fff" strokeWidth="1.200" /></svg>
          </button>
          <button aria-label="Громкость">
            <svg viewBox="0 0 16 16" className="size-4" fill="none" stroke="#fff"><path d="M1 5H4L8 1V15L4 11H1Z" fill="#fff" /><path d="M10 5C11.500 7 11.500 9 10 11M12 3C14.500 6 14.500 10 12 13" /></svg>
          </button>
          <button aria-label="Сеть">
            <svg viewBox="0 0 16 16" className="size-4" fill="none" stroke="#fff" strokeWidth="1.400"><path d="M7 3H15V11H5V8M8 14H13M10 11V14M1 1H5V6H1ZM3 6V14H6" /></svg>
          </button>
          <button className="ml-[6px] text-xs">РУС</button>
          <time className="ml-[8px] text-center text-[11px] leading-[17px]">4:03<br />04.04.2017</time>
        </div>
      </div>
    </div>
  );
}
